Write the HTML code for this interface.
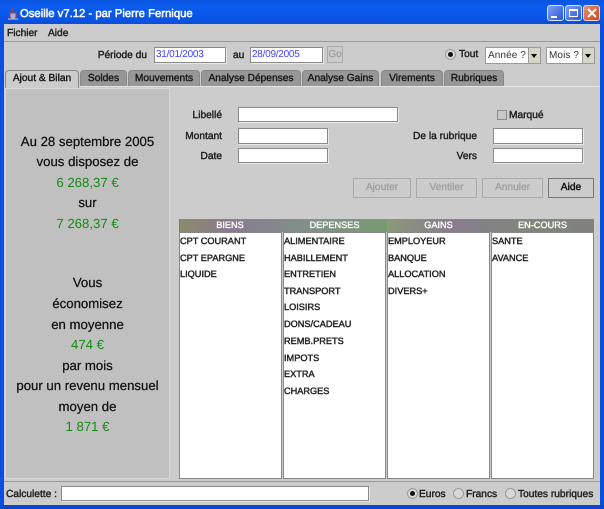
<!DOCTYPE html>
<html><head><meta charset="utf-8"><style>
html,body{margin:0;padding:0;width:604px;height:509px;overflow:hidden;background:#cccccc}
body{position:relative;font-family:"Liberation Sans",sans-serif;font-size:10.2px;font-weight:normal;-webkit-text-stroke:.42px #222;color:#222;text-rendering:geometricPrecision}
.a,.t,.i,.b,.tab,.l,.r,.m{position:absolute}
.t{white-space:nowrap;line-height:14px;margin-top:1px}
.r{text-align:right;white-space:nowrap;line-height:14px;margin-top:1px}
.i{background:#fff;border:1px solid #8a8a8a;box-sizing:border-box;box-shadow:1px 1px 0 #e8e8e8;-webkit-text-stroke:0}
.b{border:1px solid #aaa;box-sizing:border-box;color:#a0a0a0;-webkit-text-stroke:.35px #a0a0a0;text-align:center;line-height:18px;height:20px;background:#ccc}
.tab{top:70px;height:16px;background:#979797;border:1px solid #888;border-bottom:none;border-radius:4px 4px 0 0;box-sizing:border-box;text-align:center;line-height:16px;color:#111;white-space:nowrap}
.l{box-sizing:border-box;background:#fff;border:1px solid #888;top:232px;height:247px}
.l div{position:absolute;left:0;font-size:9.2px;line-height:13px;white-space:nowrap;color:#222;margin-top:-.5px}
.m{left:5px;width:165px;text-align:center;font-size:13.2px;-webkit-text-stroke:.25px #111;color:#111;line-height:16px;white-space:nowrap}
.m.g{color:#118c11;-webkit-text-stroke:0}
.h{position:absolute;top:219px;height:13px;color:#fff;-webkit-text-stroke:.35px #fff;text-align:center;font-size:9.2px;line-height:13px}
.rad{position:absolute;width:11px;height:11px;border-radius:50%;border:1px solid #999;background:#d8d8d8;box-sizing:border-box}
.rad i{position:absolute;left:2px;top:2px;width:5px;height:5px;border-radius:50%;background:#111}
.c{position:absolute;top:47px;height:17px;background:#fff;border:1px solid #999;box-sizing:border-box;-webkit-text-stroke:0;line-height:15px;padding-left:2px;color:#333;font-size:10px;letter-spacing:.1px}
.c b{position:absolute;right:0;top:0;width:12px;height:15px;background:#d6d6c8;border-left:1px solid #999;box-sizing:border-box}
.c b:after{content:"";position:absolute;left:2px;top:6px;border:3.5px solid transparent;border-top:4px solid #000;border-bottom:0}
</style></head><body>
<!-- window frame -->
<div class="a" style="left:0;top:0;width:604px;height:24px;background:linear-gradient(#0a55e0,#0b5cf0 30%,#0a55e8 70%,#0a4fd8)"></div>
<div class="a" style="left:0;top:24px;width:4px;height:485px;background:#0a50e0"></div>
<div class="a" style="left:600px;top:24px;width:4px;height:485px;background:#0a50e0"></div>
<div class="a" style="left:0;top:505px;width:604px;height:4px;background:#0a46c8"></div>
<svg class="a" style="left:6px;top:6px" width="14" height="16" viewBox="0 0 14 16"><path d="M7 1c1 2-2 3 0 5M4 7h6v3c0 2-1 3-3 3s-3-1-3-3z" fill="#a8b0d8" stroke="#b04040" stroke-width="1"/><path d="M2 13h10" stroke="#c8c8e8"/></svg>
<div class="t" style="left:20px;top:6px;color:#fff;-webkit-text-stroke:.5px #fff;font-size:11.3px">Oseille v7.12 - par Pierre Fernique</div>
<div class="a" style="left:547px;top:5px;width:17px;height:16px;background:linear-gradient(135deg,#7f9ff0,#2a55d8);border:1px solid #d8e4fa;border-radius:3px;box-sizing:border-box"><div class="a" style="left:3px;top:10px;width:6px;height:2px;background:#fff"></div></div>
<div class="a" style="left:565px;top:5px;width:17px;height:16px;background:linear-gradient(135deg,#7f9ff0,#2a55d8);border:1px solid #d8e4fa;border-radius:3px;box-sizing:border-box"><div class="a" style="left:3px;top:3px;width:9px;height:8px;border:1px solid #fff;border-top:2px solid #fff;box-sizing:border-box"></div></div>
<div class="a" style="left:583px;top:5px;width:17px;height:16px;background:linear-gradient(135deg,#e89070,#d04418);border:1px solid #f0d8d0;border-radius:3px;box-sizing:border-box"><svg class="a" style="left:2px;top:1px" width="12" height="12"><path d="M2 2l8 8M10 2l-8 8" stroke="#fff" stroke-width="2"/></svg></div>
<!-- menu -->
<div class="t" style="left:7px;top:26px">Fichier</div>
<div class="t" style="left:48px;top:26px">Aide</div>
<div class="a" style="left:4px;top:41px;width:596px;height:1px;background:#999"></div>
<!-- period row -->
<div class="r" style="left:60px;width:87px;top:48px">Période du</div>
<div class="i" style="left:154px;top:47px;width:72px;height:16px;color:#4040ff;line-height:14px;padding-left:1px;font-size:10px;letter-spacing:-.25px">31/01/2003</div>
<div class="t" style="left:233px;top:48px">au</div>
<div class="i" style="left:250px;top:47px;width:73px;height:16px;color:#4040ff;line-height:14px;padding-left:1px;font-size:10px;letter-spacing:-.25px">28/09/2005</div>
<div class="b" style="left:327px;top:46px;width:16px;height:17px;line-height:15px;font-size:10px">Go</div>
<div class="rad" style="left:445px;top:49px"><i></i></div>
<div class="t" style="left:459px;top:47px">Tout</div>
<div class="c" style="left:485px;width:56px">Année ?<b></b></div>
<div class="c" style="left:546px;width:49px">Mois ?<b></b></div>
<!-- tabs -->
<div class="tab" style="left:5px;width:74px;height:18px;background:#ccc;z-index:2">Ajout &amp; Bilan</div>
<div class="tab" style="left:80px;width:47px">Soldes</div>
<div class="tab" style="left:128px;width:72px">Mouvements</div>
<div class="tab" style="left:201px;width:100px">Analyse Dépenses</div>
<div class="tab" style="left:302px;width:77px">Analyse Gains</div>
<div class="tab" style="left:381px;width:62px">Virements</div>
<div class="tab" style="left:444px;width:60px">Rubriques</div>
<div class="a" style="left:4px;top:86px;width:596px;height:1px;background:#e4e4e4"></div>
<!-- left panel -->
<div class="a" style="left:5px;top:88px;width:165px;height:391px;background:#c0c0c0;border:1px solid #d8d8d8;box-sizing:border-box"></div>
<div class="m" style="top:134px">Au 28 septembre 2005</div>
<div class="m" style="top:154px">vous disposez de</div>
<div class="m g" style="top:175px">6 268,37 €</div>
<div class="m" style="top:195px">sur</div>
<div class="m g" style="top:216px">7 268,37 €</div>
<div class="m" style="top:275px">Vous</div>
<div class="m" style="top:296px">économisez</div>
<div class="m" style="top:317px">en moyenne</div>
<div class="m g" style="top:337px">474 €</div>
<div class="m" style="top:358px">par mois</div>
<div class="m" style="top:378px">pour un revenu mensuel</div>
<div class="m" style="top:399px">moyen de</div>
<div class="m g" style="top:419px">1 871 €</div>
<!-- form -->
<div class="r" style="left:170px;width:52px;top:108px">Libellé</div>
<div class="i" style="left:238px;top:107px;width:160px;height:15px"></div>
<div class="r" style="left:170px;width:52px;top:129px">Montant</div>
<div class="i" style="left:238px;top:128px;width:90px;height:16px"></div>
<div class="r" style="left:170px;width:52px;top:149px">Date</div>
<div class="i" style="left:238px;top:148px;width:90px;height:15px"></div>
<div class="a" style="left:497px;top:110px;width:10px;height:10px;background:#c8c8c8;border:1px solid #8a8a8a;box-sizing:border-box"></div>
<div class="t" style="left:509px;top:108px">Marqué</div>
<div class="r" style="left:400px;width:77px;top:129px">De la rubrique</div>
<div class="i" style="left:493px;top:128px;width:90px;height:16px"></div>
<div class="r" style="left:400px;width:77px;top:149px">Vers</div>
<div class="i" style="left:493px;top:148px;width:90px;height:15px"></div>
<div class="b" style="left:353px;top:178px;width:58px">Ajouter</div>
<div class="b" style="left:416px;top:178px;width:61px">Ventiler</div>
<div class="b" style="left:482px;top:178px;width:61px">Annuler</div>
<div class="b" style="left:548px;top:178px;width:46px;color:#111;-webkit-text-stroke:.42px #111;border-color:#777">Aide</div>
<!-- table -->
<div class="a" style="left:179px;top:219px;width:415px;height:13px;background:#7d7d7d"></div>
<div class="a" style="left:180px;top:219px;width:207px;height:13px;background:linear-gradient(90deg,#8a8a6a,#8a7a90 25%,#80908a 60%,#789a70)"></div>
<div class="a" style="left:387px;top:219px;width:207px;height:13px;background:linear-gradient(90deg,#8a9a78,#8a7c90 30%,#7d8878 70%,#80807c)"></div>
<div class="h" style="left:180px;width:100px">BIENS</div>
<div class="h" style="left:283px;width:103px">DEPENSES</div>
<div class="h" style="left:387px;width:103px">GAINS</div>
<div class="h" style="left:491px;width:103px">EN-COURS</div>
<div class="l" style="left:179px;width:103px">
<div style="top:2px">CPT COURANT</div><div style="top:19px">CPT EPARGNE</div><div style="top:35px">LIQUIDE</div></div>
<div class="l" style="left:283px;width:103px">
<div style="top:2px">ALIMENTAIRE</div><div style="top:19px">HABILLEMENT</div><div style="top:35px">ENTRETIEN</div><div style="top:52px">TRANSPORT</div><div style="top:68px">LOISIRS</div><div style="top:85px">DONS/CADEAU</div><div style="top:102px">REMB.PRETS</div><div style="top:119px">IMPOTS</div><div style="top:135px">EXTRA</div><div style="top:152px">CHARGES</div></div>
<div class="l" style="left:387px;width:103px">
<div style="top:2px">EMPLOYEUR</div><div style="top:19px">BANQUE</div><div style="top:35px">ALLOCATION</div><div style="top:52px">DIVERS+</div></div>
<div class="l" style="left:491px;width:103px">
<div style="top:2px">SANTE</div><div style="top:19px">AVANCE</div></div>
<!-- bottom -->
<div class="a" style="left:4px;top:481px;width:596px;height:1px;background:#999"></div>
<div class="t" style="left:6px;top:487px">Calculette :</div>
<div class="i" style="left:61px;top:486px;width:308px;height:15px"></div>
<div class="rad" style="left:407px;top:488px"><i></i></div>
<div class="t" style="left:419px;top:487px">Euros</div>
<div class="rad" style="left:453px;top:488px"></div>
<div class="t" style="left:466px;top:487px">Francs</div>
<div class="rad" style="left:505px;top:488px"></div>
<div class="t" style="left:518px;top:487px">Toutes rubriques</div>
</body></html>
